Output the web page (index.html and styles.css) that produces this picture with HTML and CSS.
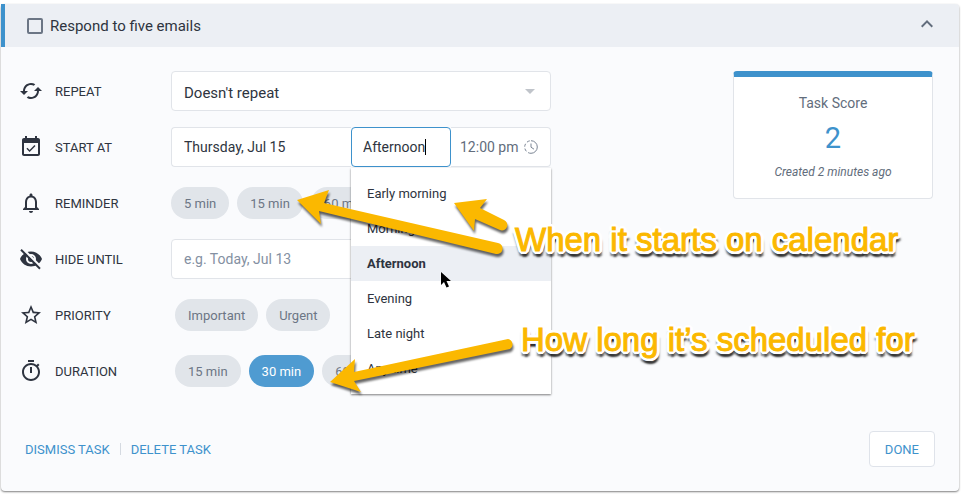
FILE: index.html
```
<!DOCTYPE html>
<html lang="en">
<head>
    <meta charset="UTF-8">
    <meta name="viewport" content="width=device-width, initial-scale=1.0">
    <title>Respond to five emails</title>
    <link rel="stylesheet" href="styles.css">
</head>
<body>
    <div class="task">
        <header class="task-header">
            <input type="checkbox" id="done-check" class="task-check">
            <label for="done-check" class="task-title">Respond to five emails</label>
            <button type="button" class="collapse" aria-label="Collapse">
                <svg width="24" height="24" viewBox="0 0 24 24"><path d="M7.41 15.41L12 10.83l4.59 4.58L18 14l-6-6-6 6z"/></svg>
            </button>
        </header>

        <form class="task-form">
            <div class="task-body">
                <div class="rows">
                    <div class="row">
                        <svg class="icon" viewBox="0 0 24 24"><path d="M19 8l-4 4h3c0 3.310-2.690 6-6 6-1.010 0-1.970-.25-2.800-.7l-1.460 1.460C8.970 19.540 10.430 20 12 20c4.420 0 8-3.580 8-8h3l-4-4zM6 12c0-3.310 2.690-6 6-6 1.010 0 1.970.25 2.800.7l1.460-1.460C15.030 4.460 13.570 4 12 4c-4.420 0-8 3.580-8 8H1l4 4 4-4H6z"/></svg>
                        <label class="label" for="repeat">REPEAT</label>
                        <div class="control select-wrap">
                            <select id="repeat" class="field select">
                                <option>Doesn't repeat</option>
                            </select>
                        </div>
                    </div>

                    <div class="row">
                        <svg class="icon" viewBox="0 0 24 24"><path d="M16.530 11.060L15.470 10l-4.880 4.880-2.120-2.120-1.060 1.060L10.590 17l5.940-5.940zM19 3h-1V1h-2v2H8V1H6v2H5c-1.110 0-1.990.9-1.990 2L3 19c0 1.100.89 2 2 2h14c1.100 0 2-.9 2-2V5c0-1.100-.9-2-2-2zm0 16H5V8h14v11z"/></svg>
                        <label class="label" for="start-date">START AT</label>
                        <div class="control start">
                            <input type="text" id="start-date" class="field start-date" value="Thursday, Jul 15">
                            <div class="field start-part">
                                <input type="text" class="bare part-input" value="Afternoon" aria-label="Part of day">
                                <span class="caret"></span>
                            </div>
                            <div class="field start-time">
                                <input type="text" class="bare time-input" value="12:00 pm" aria-label="Time">
                                <svg class="clock" viewBox="0 0 16 16"><path d="M8 1.700A6.300 6.300 0 0 1 8 14.300"/><path d="M8 14.300A6.300 6.300 0 0 1 8 1.700" stroke-dasharray="3 2"/><path d="M8 4.500V8.200l3 2"/></svg>
                            </div>
                            <ul class="menu" role="listbox">
                                <li role="option">Early morning</li>
                                <li role="option">Morning</li>
                                <li role="option" class="selected" aria-selected="true">Afternoon</li>
                                <li role="option">Evening</li>
                                <li role="option">Late night</li>
                                <li role="option">Any time</li>
                            </ul>
                        </div>
                    </div>

                    <div class="row">
                        <svg class="icon" viewBox="0 0 24 24"><path d="M12 22c1.100 0 2-.9 2-2h-4c0 1.100.9 2 2 2zm6-6v-5c0-3.070-1.630-5.640-4.500-6.320V4c0-.83-.67-1.500-1.500-1.500s-1.500.67-1.500 1.500v.68C7.640 5.360 6 7.920 6 11v5l-2 2v1h16v-1l-2-2zm-2 1H8v-6c0-2.480 1.510-4.500 4-4.500s4 2.020 4 4.500v6z"/></svg>
                        <span class="label">REMINDER</span>
                        <div class="control chips">
                            <button type="button" class="chip">5 min</button>
                            <button type="button" class="chip">15 min</button>
                            <button type="button" class="chip">60 min</button>
                        </div>
                    </div>

                    <div class="row">
                        <svg class="icon" viewBox="0 0 24 24"><path fill-rule="evenodd" d="M12 4.500C7 4.500 2.700 7.600 1 12c1.700 4.400 6 7.500 11 7.500s9.300-3.100 11-7.500c-1.700-4.400-6-7.500-11-7.500zM12 7a5 5 0 1 1 0 10 5 5 0 0 1 0-10z"/><circle cx="12" cy="12" r="3"/><path d="M3.500 1.500L22 20" stroke="#fafbfd" stroke-width="2.400"/><path d="M2 2.800L21 21.800" stroke="#2e3440" stroke-width="2"/></svg>
                        <label class="label" for="hide">HIDE UNTIL</label>
                        <div class="control">
                            <input type="text" id="hide" class="field" placeholder="e.g. Today, Jul 13">
                        </div>
                    </div>

                    <div class="row">
                        <svg class="icon" viewBox="0 0 24 24"><path d="M22 9.240l-7.190-.62L12 2 9.190 8.630 2 9.240l5.460 4.730L5.820 21 12 17.270 18.180 21l-1.630-7.030L22 9.240zM12 15.400l-3.760 2.270 1-4.280-3.320-2.880 4.380-.38L12 6.100l1.710 4.040 4.380.38-3.320 2.880 1 4.280L12 15.400z"/></svg>
                        <span class="label">PRIORITY</span>
                        <div class="control chips chips-inset">
                            <button type="button" class="chip">Important</button>
                            <button type="button" class="chip">Urgent</button>
                        </div>
                    </div>

                    <div class="row">
                        <svg class="icon" viewBox="0 0 24 24"><path d="M15 1H9v2h6V1zm-4 13h2V8h-2v6zm8.030-6.610l1.420-1.420c-.43-.51-.9-.99-1.410-1.410l-1.420 1.420C16.070 4.740 14.120 4 12 4c-4.970 0-9 4.030-9 9s4.020 9 9 9 9-4.030 9-9c0-2.120-.74-4.070-1.970-5.610zM12 20c-3.870 0-7-3.130-7-7s3.130-7 7-7 7 3.130 7 7-3.130 7-7 7z"/></svg>
                        <span class="label">DURATION</span>
                        <div class="control chips chips-inset">
                            <button type="button" class="chip">15 min</button>
                            <button type="button" class="chip active">30 min</button>
                            <button type="button" class="chip">60 min</button>
                        </div>
                    </div>
                </div>

                <aside class="score">
                    <div class="score-title">Task Score</div>
                    <div class="score-value">2</div>
                    <div class="score-note">Created 2 minutes ago</div>
                </aside>
            </div>

            <footer class="task-footer">
                <button type="button" class="link">DISMISS TASK</button>
                <button type="button" class="link link-next">DELETE TASK</button>
                <button type="submit" class="done">DONE</button>
            </footer>
        </form>
    </div>

    <!-- callouts over the form -->
    <svg class="overlay" width="967" height="497" viewBox="0 0 967 497">
        <g class="arrows">
            <path d="M297 200L329 190L324 203L498 243A5.500 5.500 0 0 1 496 254L319 211L321 224Z"/>
            <path d="M454 203L487 199L480 208L504 220A5 5 0 0 1 500 230L475 219L474 231Z"/>
            <path d="M330 382L355 359L354 372L508 339A5.500 5.500 0 0 1 510 349L354 381L361 392Z"/>
        </g>
        <path class="pointer" d="M441 272v13l3-3 2.500 5.500 2.500-1-2.500-5.500h4.500z"/>
    </svg>
    <p class="callout callout-start">When it starts on calendar</p>
    <p class="callout callout-length">How long it’s scheduled for</p>
</body>
</html>
```
FILE: styles.css
```
* {
    box-sizing: border-box;
}

body {
    margin: 0;
    padding: 4px 8px 6px 1px;
    position: relative;
    background: #fff;
    color: #2e3440;
    font-family: Roboto, sans-serif;
    font-size: 13px;
}

button, input, select {
    font: inherit;
    color: inherit;
}

button {
    cursor: pointer;
}

.task {
    background: #fafbfd;
    border-radius: 4px;
    box-shadow: 0 1px 2px rgba(0,0,0,0.5);
}

.task-header {
    display: flex;
    align-items: center;
    height: 43px;
    padding: 0 20px 0 22px;
    background: #eceff4;
    border-left: 4px solid #3e92cc;
    border-radius: 0 4px 0 0;
}

.task-check {
    appearance: none;
    width: 16px;
    height: 16px;
    margin: 0;
    border: 2px solid #6c7685;
    border-radius: 2px;
}

.task-title {
    margin-left: 7px;
    font-size: 15px;
}

.collapse {
    display: flex;
    margin-left: auto;
    padding: 0 0 3px;
    border: none;
    background: none;
    fill: #626d7c;
}

.task-body {
    display: flex;
    justify-content: space-between;
    align-items: flex-start;
    gap: 24px;
    padding: 24px 26px 0 18px;
}

.rows {
    flex: 0 1 532px;
    display: grid;
    gap: 16px;
}

.row {
    display: flex;
    align-items: center;
    height: 40px;
}

.icon {
    flex: none;
    width: 24px;
    height: 24px;
    margin-right: 12px;
    fill: #2e3440;
}

.label {
    flex: none;
    width: 116px;
}

.control {
    flex: 1;
    min-width: 0;
}

.field {
    width: 100%;
    height: 40px;
    padding: 0 12px;
    border: 1px solid #e1e4e9;
    border-radius: 4px;
    background: #fff;
    font-size: 14px;
}

.field::placeholder {
    color: #8490a2;
    opacity: 1;
}

.select-wrap {
    position: relative;
}

.select-wrap::after {
    content: "";
    position: absolute;
    right: 16px;
    top: 18px;
    border: 5px solid transparent;
    border-top-color: #c0c4ca;
    border-bottom: 0;
    pointer-events: none;
}

.select {
    appearance: none;
    padding-top: 3px;
    font-size: 15px;
}

.start {
    position: relative;
    display: flex;
}

.start-date {
    flex: 1;
    min-width: 0;
    border-right: 0;
    border-radius: 4px 0 0 4px;
}

.start-part, .start-time {
    flex: none;
    display: flex;
    align-items: center;
    width: 100px;
}

.start-part {
    padding: 0 11px;
    border-color: #3e92cc;
}

.start-time {
    padding: 0 11px 0 9px;
    border-left: 0;
    border-radius: 0 4px 4px 0;
    color: #626d7c;
}

.bare {
    padding: 0;
    border: none;
    outline: none;
    background: transparent;
}

.part-input {
    field-sizing: content;
}

.caret {
    width: 1px;
    height: 16px;
    background: #000;
}

.time-input {
    flex: 1;
    min-width: 0;
}

.clock {
    flex: none;
    width: 16px;
    height: 16px;
    fill: none;
    stroke: #7b8594;
}

.menu {
    position: absolute;
    top: 41px;
    right: 0;
    z-index: 1;
    width: 200px;
    margin: 0;
    padding: 8px 0;
    list-style: none;
    background: #fff;
    box-shadow: 0 1px 2px rgba(0,0,0,0.5);
}

.menu li {
    padding: 0 16px;
    line-height: 35px;
}

.menu .selected {
    background: #eceff4;
    font-weight: bold;
}

.chips {
    display: flex;
    gap: 8px;
}

.chips-inset {
    padding-left: 4px;
}

.chip {
    height: 32px;
    padding: 0 13px;
    border: none;
    border-radius: 16px;
    background: #e1e5ea;
    color: #6c7685;
    white-space: nowrap;
}

.chip.active {
    background: #4f9bd1;
    color: #fff;
}

.score {
    flex: none;
    width: 200px;
    padding: 17px 12px 18px;
    border: 1px solid #e1e4e9;
    border-top: 6px solid #3e92cc;
    border-radius: 4px;
    background: #fff;
    color: #626d7c;
    text-align: center;
}

.score-title {
    font-size: 14px;
    line-height: 18px;
}

.score-value {
    margin: 9px 0;
    color: #3e92cc;
    font-size: 29px;
    line-height: 34px;
}

.score-note {
    font-size: 12px;
    font-style: italic;
    line-height: 16px;
}

.task-footer {
    display: flex;
    align-items: center;
    padding: 40px 24px 24px;
}

.link {
    padding: 0;
    border: none;
    background: none;
    color: #3e92cc;
}

.link-next {
    display: flex;
    align-items: center;
}

.link-next::before {
    content: "";
    width: 1px;
    height: 12px;
    margin: 0 10px;
    background: #d5dae1;
}

.done {
    height: 36px;
    margin-left: auto;
    padding: 0 15px;
    border: 1px solid #dfe3ea;
    border-radius: 4px;
    background: #fff;
    color: #3e92cc;
}

.overlay {
    position: absolute;
    top: 0;
    left: 0;
    z-index: 2;
    pointer-events: none;
}

.arrows {
    fill: #fbb800;
    filter: drop-shadow(1px 3px 1px rgba(0,0,0,0.6));
}

.pointer {
    fill: #000;
    stroke: #fff;
    stroke-width: 1;
    paint-order: stroke;
}

.callout {
    position: absolute;
    z-index: 3;
    margin: 0;
    color: #fbb800;
    font-family: "Liberation Sans", Arial, sans-serif;
    font-size: 33px;
    line-height: 38px;
    white-space: nowrap;
    -webkit-text-stroke: 1px #fbb800;
    text-shadow: 3px 0 #fff, -3px 0 #fff, 0 3px #fff, 0 -3px #fff,
        2px 2px #fff, -2px 2px #fff, 2px -2px #fff, -2px -2px #fff,
        3px 1px #fff, -3px 1px #fff, 3px -1px #fff, -3px -1px #fff,
        1px 3px #fff, -1px 3px #fff, 1px -3px #fff, -1px -3px #fff,
        1px 6px 2px rgba(0,0,0,0.7), 3px 5px 2px rgba(0,0,0,0.5), -2px 5px 2px rgba(0,0,0,0.5);
    pointer-events: none;
}

.callout-start {
    top: 221px;
    left: 515px;
}

.callout-length {
    top: 321px;
    left: 521px;
}
```
